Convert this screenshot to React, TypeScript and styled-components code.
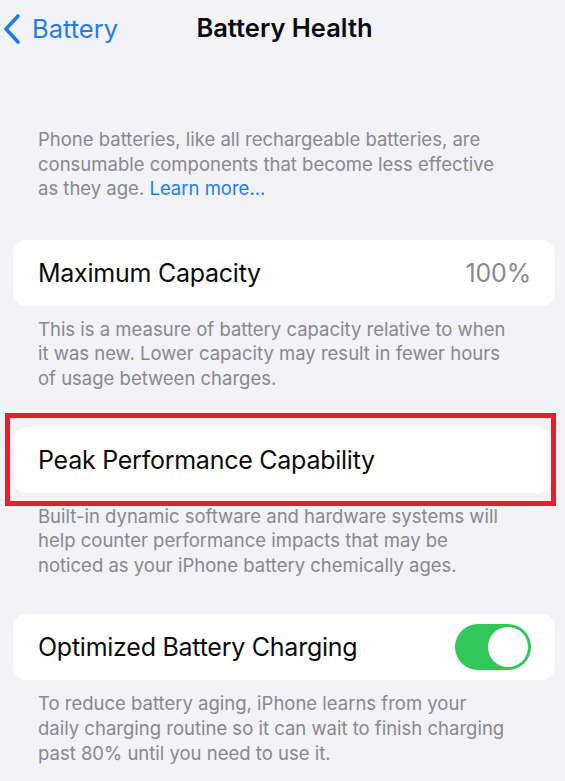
import styled, { createGlobalStyle } from "styled-components";

const GlobalStyle = createGlobalStyle`
  html, body {
    margin: 0;
    padding: 0;
    background: #f2f2f7;
  }
  body {
    font-family: Inter, "Liberation Sans", Arial, sans-serif;
    -webkit-font-smoothing: antialiased;
  }
`;

const Screen = styled.div`
  width: 565px;
  height: 781px;
  overflow: hidden;
  background: #f2f2f7;
  display: flex;
  flex-direction: column;
`;

const NavBar = styled.header`
  position: relative;
  height: 56px;
  display: flex;
  align-items: center;
  justify-content: center;
`;

const BackButton = styled.a`
  position: absolute;
  left: 3px;
  top: 13px;
  display: flex;
  align-items: center;
  gap: 11px;
  color: #1f7cf0;
  font-size: 25.5px;
  text-decoration: none;
`;

const Title = styled.h1`
  margin: 0;
  margin-top: -2px;
  margin-left: 4px;
  font-size: 25.5px;
  font-weight: 600;
  color: #0b0b0c;
`;

const Content = styled.main`
  display: flex;
  flex-direction: column;
  padding: 71px 10px 0 13px;
`;

const Note = styled.p<{ $gap?: number }>`
  margin: 0 0 ${(p) => p.$gap ?? 0}px;
  padding: 0 0 0 25px;
  font-size: 18.5px;
  line-height: 24.6px;
  color: #88888d;
  white-space: nowrap;
`;

const Link = styled.a`
  color: #1f7cf0;
  text-decoration: none;
`;

const Card = styled.div<{ $gap?: number }>`
  height: 66px;
  background: #ffffff;
  border-radius: 13px;
  display: flex;
  align-items: center;
  justify-content: space-between;
  padding: 0 24px 0 25px;
  margin-bottom: ${(p) => p.$gap ?? 11}px;
`;

const Highlight = styled.div`
  margin: 0 -1px -2px -8px;
  padding: 9px 0 8px 3px;
  border: 5px solid #e2202e;
  position: relative;
  z-index: 1;
`;

const Label = styled.span`
  font-size: 25px;
  color: #0b0b0c;
  letter-spacing: -0.25px;
`;

const Value = styled.span`
  font-size: 25px;
  color: #8a8a8e;
  letter-spacing: -0.2px;
`;

const Toggle = styled.span<{ $on: boolean }>`
  position: relative;
  width: 76px;
  height: 46px;
  border-radius: 23px;
  background: ${(p) => (p.$on ? "#33c759" : "#e9e9ea")};
  flex-shrink: 0;
  &::after {
    content: "";
    position: absolute;
    top: 3px;
    left: ${(p) => (p.$on ? "33px" : "3px")};
    width: 40px;
    height: 40px;
    border-radius: 50%;
    background: #ffffff;
  }
`;

const Chevron = () => (
  <svg width="18" height="30" viewBox="0 0 18 30">
    <path
      d="M15 2 L3 15 L15 28"
      fill="none"
      stroke="#1f7cf0"
      strokeWidth="3.6"
      strokeLinecap="round"
      strokeLinejoin="round"
    />
  </svg>
);

export default function App() {
  return (
    <>
      <GlobalStyle />
      <Screen>
        <NavBar>
          <BackButton href="#">
            <Chevron />
            Battery
          </BackButton>
          <Title>Battery Health</Title>
        </NavBar>
        <Content>
          <Note $gap={39}>
            Phone batteries, like all rechargeable batteries, are
            <br />
            consumable components that become less effective
            <br />
            as they age. <Link href="#">Learn more...</Link>
          </Note>
          <Card>
            <Label>Maximum Capacity</Label>
            <Value>100%</Value>
          </Card>
          <Note $gap={22}>
            This is a measure of battery capacity relative to when
            <br />
            it was new. Lower capacity may result in fewer hours
            <br />
            of usage between charges.
          </Note>
          <Highlight>
            <Card $gap={0}>
              <Label>Peak Performance Capability</Label>
            </Card>
          </Highlight>
          <Note $gap={37}>
            Built-in dynamic software and hardware systems will
            <br />
            help counter performance impacts that may be
            <br />
            noticed as your iPhone battery chemically ages.
          </Note>
          <Card>
            <Label>Optimized Battery Charging</Label>
            <Toggle $on />
          </Card>
          <Note>
            To reduce battery aging, iPhone learns from your
            <br />
            daily charging routine so it can wait to finish charging
            <br />
            past 80% until you need to use it.
          </Note>
        </Content>
      </Screen>
    </>
  );
}
